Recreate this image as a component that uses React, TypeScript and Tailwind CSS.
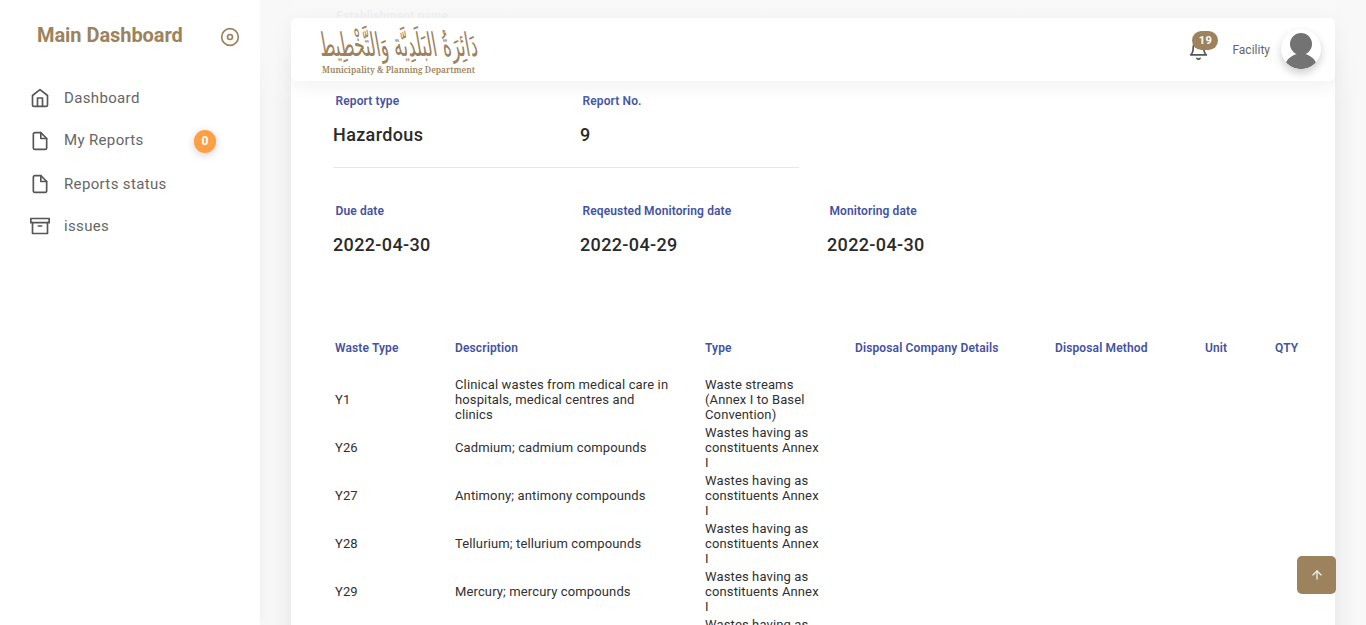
import { FiArchive, FiArrowUp, FiBell, FiDisc, FiFile, FiHome } from 'react-icons/fi';
import type { ReactNode } from 'react';

const wasteRows = [
  ['Y1', 'Clinical wastes from medical care in hospitals, medical centres and clinics', 'Waste streams (Annex I to Basel Convention)'],
  ['Y26', 'Cadmium; cadmium compounds', 'Wastes having as constituents Annex I'],
  ['Y27', 'Antimony; antimony compounds', 'Wastes having as constituents Annex I'],
  ['Y28', 'Tellurium; tellurium compounds', 'Wastes having as constituents Annex I'],
  ['Y29', 'Mercury; mercury compounds', 'Wastes having as constituents Annex I'],
  ['', '', 'Wastes having as constituents Annex I'],
];

function NavItem({ icon, label, badge }: { icon: ReactNode; label: string; badge?: string }) {
  return (
    <a className="flex h-[42.7px] items-center pl-[30px] text-[15px] leading-[22px] tracking-[0.35px]">
      <span className="mr-[14px] flex w-5 justify-center text-[#565656]">{icon}</span>
      <span className={badge ? 'pb-[2px] text-[#666]' : 'text-[#666]'}>{label}</span>
      {badge && (
        <span className="mr-11 ml-auto flex h-[23px] w-[22px] items-center justify-center rounded-full bg-[#ff9f43] text-[12px] font-bold text-white shadow-[0_2px_8px_rgba(0,0,0,0.18)]">
          {badge}
        </span>
      )}
    </a>
  );
}

function Field({ label, value }: { label: string; value: string }) {
  return (
    <div className="w-[247px] shrink-0">
      <div className="pl-[2.5px] text-[12px] leading-[18px] font-semibold tracking-[0.12px] text-[#4353a0]">{label}</div>
      <div className="mt-[13px] text-[18px] leading-[24px] font-medium tracking-[0.36px] text-[#2a2a2a]">{value}</div>
    </div>
  );
}

function Logo() {
  return (
    <svg width="164" height="60" viewBox="0 0 164 60" fill="#9c825d" className="overflow-visible">
      <g transform="translate(0 36) skewX(10) scale(1 1.25)">
        <text x="82" y="0" textAnchor="middle" direction="rtl" fontFamily="'DejaVu Sans', sans-serif" fontSize="26" textLength="158" lengthAdjust="spacingAndGlyphs">
          دَائِرَةُ البَلَدِيَّة وَالتَّخْطِيط
        </text>
      </g>
      <text x="4" y="53" fontFamily="'Noto Serif', 'DejaVu Serif', serif" fontSize="9.5" fontWeight="600" textLength="153" lengthAdjust="spacingAndGlyphs">
        Municipality &amp; Planning Department
      </text>
    </svg>
  );
}

export default function App() {
  return (
    <div className="relative flex h-[625px] w-full overflow-hidden bg-[#f8f8f8] font-['Roboto',sans-serif]">
      <aside className="w-[260px] shrink-0 bg-white shadow-[0_0_15px_rgba(34,41,47,0.05)]">
        <div className="flex h-[77px] items-start justify-between pt-[22px] pr-5 pl-[37px] text-[#9c825d]">
          <h2 className="text-[20px] leading-[26px] font-bold tracking-[-0.05px]">Main Dashboard</h2>
          <FiDisc size={20} className="mt-[5px]" />
        </div>
        <nav className="flex flex-col">
          <NavItem icon={<FiHome size={20} />} label="Dashboard" />
          <NavItem icon={<FiFile size={20} />} label="My Reports" badge="0" />
          <NavItem icon={<FiFile size={20} />} label="Reports status" />
          <NavItem icon={<FiArchive size={20} />} label="issues" />
        </nav>
      </aside>

      <main className="flex-1 overflow-hidden pr-[31px] pl-[31px]">
        <div className="h-[700px] bg-white px-[42px] shadow-[0_4px_24px_rgba(34,41,47,0.1)]">
          <div className="h-[92px] pt-[7px] pl-[3px] text-[12px] leading-[18px] font-semibold tracking-[0.12px] text-[#4353a0]">Establishment name</div>
          <div className="flex h-[75px] w-[465px]">
            <Field label="Report type" value="Hazardous" />
            <Field label="Report No." value="9" />
          </div>
          <div className="h-px w-[466px] bg-[#e6e6e6]" />
          <div className="flex pt-[34px]">
            <Field label="Due date" value="2022-04-30" />
            <Field label="Reqeusted Monitoring date" value="2022-04-29" />
            <Field label="Monitoring date" value="2022-04-30" />
          </div>

          <table className="mt-[68px] w-[990px] table-fixed border-separate border-spacing-0 text-left">
            <colgroup>
              <col className="w-[120px]" />
              <col className="w-[250px]" />
              <col className="w-[150px]" />
              <col className="w-[200px]" />
              <col className="w-[150px]" />
              <col className="w-[70px]" />
              <col className="w-[50px]" />
            </colgroup>
            <thead>
              <tr className="h-[50px] text-[12px] leading-[18px] tracking-[0.13px] text-[#4353a0]">
                {['Waste Type', 'Description', 'Type', 'Disposal Company Details', 'Disposal Method', 'Unit', 'QTY'].map((h) => (
                  <th key={h} className="p-0 pb-1 pl-[2px] align-middle font-semibold whitespace-nowrap">{h}</th>
                ))}
              </tr>
            </thead>
            <tbody className="text-[13px] leading-[15px] tracking-[0.13px] text-[#303030]">
              {wasteRows.map(([code, description, type], i) => (
                <tr key={i} className="h-12">
                  <td className="p-0 pl-[2px]">{code}</td>
                  <td className="p-0 pr-[30px] pl-[2px]">{description}</td>
                  <td className="p-0 pr-[34px] pl-[2px]">{type}</td>
                  <td colSpan={4} />
                </tr>
              ))}
            </tbody>
          </table>
        </div>
      </main>

      <div className="pointer-events-none absolute top-0 right-0 left-[260px] h-[102px] bg-[linear-gradient(180deg,rgba(248,248,248,0.95)_44%,rgba(248,248,248,0.46)_73%,rgba(255,255,255,0))]" />

      <header className="absolute top-[18px] right-[31px] left-[291px] flex h-[63px] items-center rounded-md bg-white pr-[14px] pl-[27px] shadow-[0_4px_20px_rgba(0,0,0,0.05)]">
        <Logo />
        <div className="relative mt-[2px] ml-auto text-[#565656]">
          <FiBell size={21} />
          <span className="absolute -top-[9px] left-[4px] flex h-[19px] w-[26px] items-center justify-center rounded-full bg-[#9c825d] text-[11px] leading-none font-bold tracking-[0.3px] text-white">19</span>
        </div>
        <span className="ml-[23px] text-[12px] text-[#666]">Facility</span>
        <div className="mb-[2px] ml-[11px] size-10 overflow-hidden rounded-full bg-white shadow-[0_4px_8px_rgba(0,0,0,0.2)]">
          <svg viewBox="0 0 40 40" className="size-10" fill="#737373">
            <circle cx="20" cy="15" r="11" />
            <path d="M16 22H24V25C29 26.5 33 29 35 33.5C31 38 26 40 20 40S9 38 5 33.5C7 29 11 26.5 16 25Z" />
          </svg>
        </div>
      </header>

      <button className="absolute right-[30px] bottom-[31px] flex h-[38px] w-[39px] items-center justify-center rounded-[5px] bg-[#9c825d] text-white">
        <FiArrowUp size={14} />
      </button>
    </div>
  );
}
